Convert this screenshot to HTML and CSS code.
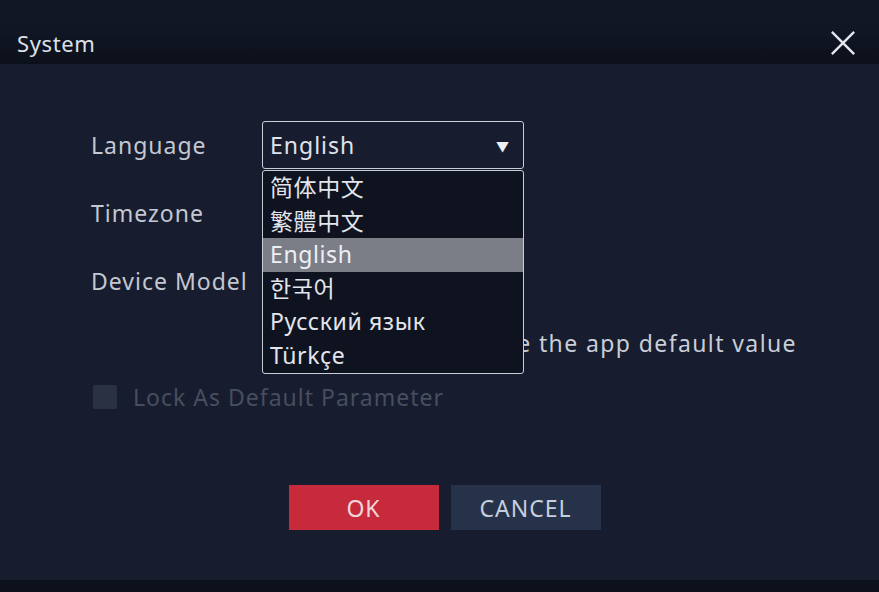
FILE: index.html
```html
<!DOCTYPE html>
<html lang="en">
<head>
	<meta charset="UTF-8">
	<title>System</title>
	<link rel="stylesheet" href="styles.css">
</head>
<body>
	<div class="dialog">
		<div class="dialog-head">
			<span class="dialog-title">System</span>
			<svg class="dialog-close" viewBox="0 0 28 28"><path d="M2 2 L26 26 M26 2 L2 26" /></svg>
		</div>
		<div class="dialog-body">
			<div class="form">
				<div class="form-row">
					<span class="form-label">Language</span>
					<div class="select">
						<div class="select-box">
							<span>English</span>
							<span class="select-arrow">&#9660;</span>
						</div>
						<ul class="select-list">
							<li>简体中文</li>
							<li lang="zh-TW">繁體中文</li>
							<li class="active">English</li>
							<li lang="ko">한국어</li>
							<li>Русский язык</li>
							<li>Türkçe</li>
						</ul>
					</div>
				</div>
				<div class="form-row">
					<span class="form-label">Timezone</span>
				</div>
				<div class="form-row">
					<span class="form-label">Device Model</span>
				</div>
				<div class="form-note">Use the app default value</div>
				<label class="lock">
					<span class="lock-box"></span>
					<span class="lock-text">Lock As Default Parameter</span>
				</label>
			</div>
			<div class="actions">
				<button class="btn btn-ok">OK</button>
				<button class="btn btn-cancel">CANCEL</button>
			</div>
		</div>
	</div>
</body>
</html>
```

FILE: styles.css
```css
body {
	margin: 0;
	background: #121726;
	font-family: "Noto Sans", "Noto Sans CJK SC", sans-serif;
	color: #c9ced8;
}

.dialog {
	width: 879px;
	height: 592px;
	display: flex;
	flex-direction: column;
	background: #0d111b;
}

.dialog-head { /* шапка окна */
	height: 64px;
	flex: none;
	display: flex;
	align-items: center;
	justify-content: space-between;
	padding: 22px 23px 0 17px;
	background: linear-gradient(#121726 40%, #0c101a);
	box-sizing: border-box;
}

.dialog-title {
	font-size: 22px;
	letter-spacing: 0.6px;
	color: #dde1e9;
}

.dialog-close {
	width: 26px;
	height: 26px;
	stroke: #e4e7ee;
	stroke-width: 2.6;
	fill: none;
}

.dialog-body {
	flex: 1;
	margin-bottom: 12px;
	background: #171d2e;
	display: flex;
	flex-direction: column;
}

.form {
	padding: 47px 0 0 91px;
	font-size: 23px;
	letter-spacing: 1px;
}

.form-row {
	display: flex;
	align-items: center;
	height: 68px;
}

.form-label {
	width: 171px;
	flex: none;
	color: #c3c8d2;
}

.select {
	position: relative;
	width: 262px;
}

.select-box {
	height: 48px;
	box-sizing: border-box;
	border: 1px solid #c9cdd5;
	border-radius: 3px;
	display: flex;
	align-items: center;
	justify-content: space-between;
	padding: 0 13px 0 7px;
	color: #e0e3ea;
}

.select-arrow {
	font-size: 13px;
	color: #eef0f4;
}

.select-list { /* раскрытый список */
	position: absolute;
	left: 0;
	top: 49px;
	width: 262px;
	box-sizing: border-box;
	margin: 0;
	padding: 0;
	list-style: none;
	background: #0f1320;
	border: 1px solid #c9cdd5;
	border-radius: 3px;
	z-index: 2;
}

.select-list li {
	height: 33.6px;
	line-height: 33px;
	padding-left: 7px;
	color: #e2e5eb;
	letter-spacing: 0.6px;
}

.select-list li.active {
	background: #7b7e87;
	color: #eef0f4;
}

.form-note { /* подсказка, частично закрыта списком */
	width: 706px;
	text-align: right;
	margin-top: 12px;
	line-height: 32px;
	letter-spacing: 1.4px;
	color: #c9ced8;
}

.lock {
	display: flex;
	align-items: center;
	gap: 16px;
	margin-top: 22px;
	padding-left: 2px;
}

.lock-box {
	width: 24px;
	height: 24px;
	background: #2a3142;
	border-radius: 2px;
}

.lock-text {
	color: #474e5f;
}

.actions {
	display: flex;
	justify-content: center;
	gap: 12px;
	margin-top: 72px;
	padding-left: 10px;
}

.btn {
	width: 150px;
	height: 45px;
	border: none;
	font-family: inherit;
	font-size: 23px;
	letter-spacing: 1px;
	cursor: pointer;
}

.btn-ok {
	background: #c72a3b;
	color: #f0d6da;
}

.btn-cancel {
	background: #26324a;
	color: #c6cfdd;
}
```
